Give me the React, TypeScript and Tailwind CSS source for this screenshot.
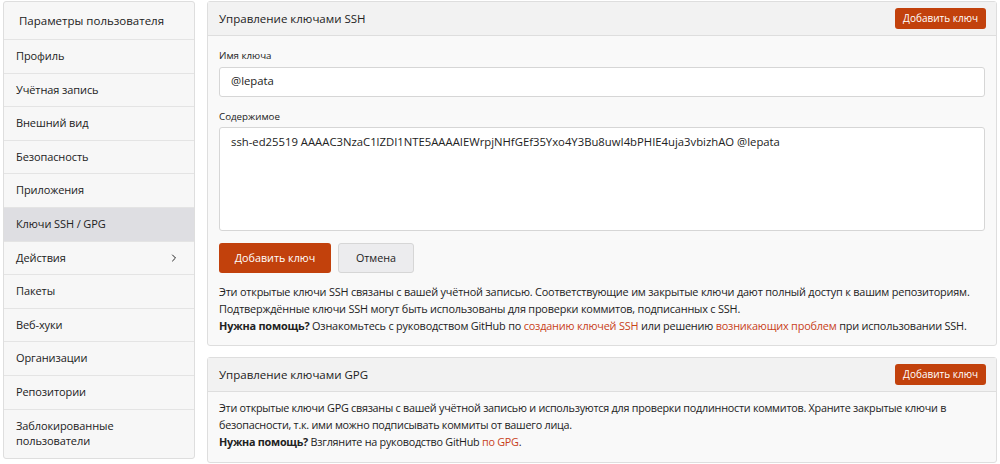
import { ChevronRight } from "lucide-react";

const NAV = [
  { label: "Профиль" },
  { label: "Учётная запись" },
  { label: "Внешний вид" },
  { label: "Безопасность" },
  { label: "Приложения" },
  { label: "Ключи SSH / GPG", active: true },
  { label: "Действия", sub: true },
  { label: "Пакеты" },
  { label: "Веб-хуки" },
  { label: "Организации" },
  { label: "Репозитории" },
];

function AddButton() {
  return (
    <button className="rounded-[3px] bg-[#c2410c] px-[8px] h-[21px] text-[10px] text-white">
      Добавить ключ
    </button>
  );
}

function Sidebar() {
  return (
    <aside className="w-[192px] shrink-0 self-start rounded-[3px] border border-[#dedede] bg-[#f7f7f7] text-[11px] tracking-[-0.1px] text-[#222]">
      <div className="h-[38px] flex items-center px-[15px] text-[11.5px] tracking-normal border-b border-[#e4e4e4]">
        Параметры пользователя
      </div>
      {NAV.map((item) => (
        <div
          key={item.label}
          className={
            "h-[33.6px] flex items-center justify-between pl-[12px] pr-[14px] border-b border-[#e4e4e4] " +
            (item.active ? "bg-[#dedee2]" : "")
          }
        >
          <span>{item.label}</span>
          {item.sub && <ChevronRight className="w-3 h-3" strokeWidth={2} />}
        </div>
      ))}
      <div className="px-[12px] pt-[8px] pb-[10px] leading-[15px]">
        Заблокированные
        <br />
        пользователи
      </div>
    </aside>
  );
}

export default function App() {
  return (
    <div
      className="flex gap-[12px] pl-[3px] pr-[3px] pt-[1px] bg-white w-[1000px] h-[464px] overflow-hidden"
      style={{ fontFamily: '"Open Sans", "Noto Sans", sans-serif' }}
    >
      <Sidebar />

      <main className="flex-1 flex flex-col gap-[11px]">
        {/* SSH */}
        <section className="rounded-[3px] border border-[#dedede] bg-[#f9f9f9]">
          <header className="h-[34px] flex items-center justify-between pl-[11px] pr-[10px] bg-[#f2f2f2] border-b border-[#dedede] text-[11.5px] text-[#222]">
            <span>Управление ключами SSH</span>
            <AddButton />
          </header>
          <div className="px-[11px] pt-[13px] pb-[11px] text-[#222]">
            <div className="text-[9.75px] mb-[3px]">Имя ключа</div>
            <div className="h-[30px] rounded-[3px] border border-[#d6d6d6] bg-white flex items-center px-[11px] text-[11.3px]">
              @lepata
            </div>
            <div className="text-[9.75px] mt-[13px] mb-[3px]">Содержимое</div>
            <div className="h-[104px] rounded-[3px] border border-[#d6d6d6] bg-white px-[11px] pt-[6px] text-[11.3px]">
              ssh-ed25519 AAAAC3NzaC1lZDI1NTE5AAAAIEWrpjNHfGEf35Yxo4Y3Bu8uwI4bPHIE4uja3vbizhAO @lepata
            </div>
            <div className="flex gap-[7px] mt-[12px]">
              <button className="h-[30px] w-[112px] rounded-[3px] bg-[#c2410c] text-white text-[10.75px]">
                Добавить ключ
              </button>
              <button className="h-[30px] w-[76px] rounded-[3px] border border-[#d6d6d6] bg-[#ececee] text-[10.75px]">
                Отмена
              </button>
            </div>
            <div className="mt-[10px] text-[10.9px] tracking-[-0.2px] leading-[17px] whitespace-nowrap">
              <div>
                Эти открытые ключи SSH связаны с вашей учётной записью. Соответствующие им закрытые ключи дают полный доступ к вашим репозиториям.
              </div>
              <div>Подтверждённые ключи SSH могут быть использованы для проверки коммитов, подписанных с SSH.</div>
              <div>
                <b>Нужна помощь?</b> Ознакомьтесь с руководством GitHub по{" "}
                <span className="text-[#c8411a]">созданию ключей SSH</span> или решению{" "}
                <span className="text-[#c8411a]">возникающих проблем</span> при использовании SSH.
              </div>
            </div>
          </div>
        </section>

        {/* GPG */}
        <section className="rounded-[3px] border border-[#dedede] bg-[#f9f9f9]">
          <header className="h-[34px] flex items-center justify-between pl-[11px] pr-[10px] bg-[#f2f2f2] border-b border-[#dedede] text-[11.5px] text-[#222]">
            <span>Управление ключами GPG</span>
            <AddButton />
          </header>
          <div className="px-[11px] pt-[7px] pb-[12px] text-[10.8px] tracking-[-0.25px] leading-[17px] text-[#222] whitespace-nowrap">
            <div>
              Эти открытые ключи GPG связаны с вашей учётной записью и используются для проверки подлинности коммитов. Храните закрытые ключи в
            </div>
            <div>безопасности, т.к. ими можно подписывать коммиты от вашего лица.</div>
            <div>
              <b>Нужна помощь?</b> Взгляните на руководство GitHub <span className="text-[#c8411a]">по GPG</span>.
            </div>
          </div>
        </section>
      </main>
    </div>
  );
}
